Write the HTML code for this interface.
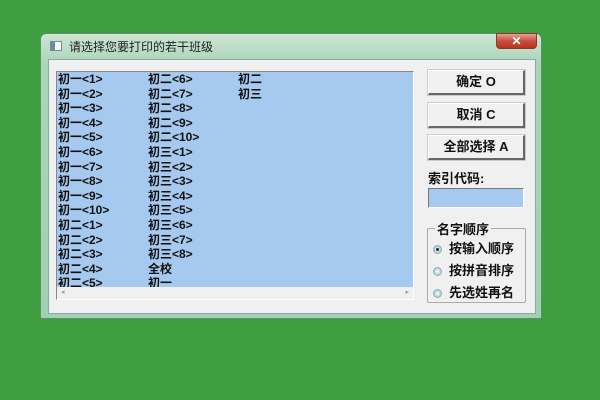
<!DOCTYPE html>
<html><head><meta charset="utf-8"><style>
*{margin:0;padding:0;box-sizing:border-box}
body{width:600px;height:400px;background:#3f9e40;position:relative;overflow:hidden;font-family:"Liberation Sans","Noto Sans CJK SC","WenQuanYi Zen Hei",sans-serif}
.win{position:absolute;left:40px;top:33px;width:502px;height:286px;background:linear-gradient(#cfe4d6,#a9d6b8 30px,#9fd1b2);border:1px solid #5f8f6e;border-radius:6px 6px 2px 2px}
.title{position:absolute;left:28px;top:4px;font-size:12px;color:#222;}
.ico{position:absolute;left:9px;top:7px;width:12px;height:10px;background:#fff;border:1px solid #7a8a8a}
.ico:before{content:"";position:absolute;left:0;top:0;width:4px;height:8px;background:#6a8aa8}
.close{position:absolute;left:455px;top:-1px;width:41px;height:16px;border-radius:0 0 4px 4px;background:linear-gradient(#e6a098,#c84e3c 50%,#b8331f);border:1px solid #8a3a2a;color:#fff;font-weight:bold;font-size:12px;text-align:center;line-height:14px}
.client{position:absolute;left:7px;top:25px;width:488px;height:255px;background:#f0f0f0;border:1px solid #8aa}
.list{position:absolute;left:7px;top:11px;width:358px;height:229px;background:#a6c9ef;border:1px solid #888;border-right-color:#fff;border-bottom-color:#fff;overflow:hidden}
.col{position:absolute;top:0px;font-size:12px;font-weight:bold;line-height:14.6px;color:#111;white-space:nowrap}
.hs{position:absolute;left:0;bottom:0;width:100%;height:12px;background:#f0f0f0;font-size:7px;color:#999;line-height:12px;z-index:2}
.btn{position:absolute;left:379px;width:97px;height:25px;background:#f0f0f0;border:1px solid #fff;border-right:2px solid #666;border-bottom:2px solid #666;outline:1px solid #ccc;font-size:13px;font-weight:bold;text-align:center;line-height:22px;color:#111}
.lab{position:absolute;left:379px;top:108px;font-size:13px;font-weight:bold;color:#111}
.inp{position:absolute;left:379px;top:128px;width:96px;height:20px;background:#a6c9ef;border:1px solid #777;border-right-color:#fff;border-bottom-color:#fff}
.grp{position:absolute;left:378px;top:168px;width:99px;height:75px;border:1px solid #aaa;border-radius:2px}
.grp .lg{position:absolute;left:7px;top:-10px;background:#f0f0f0;padding:0 2px;font-size:13px;font-weight:bold;color:#111}
.r{position:absolute;left:5px;font-size:13px;font-weight:bold;color:#111;white-space:nowrap}
.r i{display:inline-block;width:9px;height:9px;border-radius:50%;background:radial-gradient(#fff,#9cc 80%);border:1px solid #9ab;margin-right:7px;vertical-align:-1px;position:relative}
.r i.on:after{content:"";position:absolute;left:2px;top:2px;width:3px;height:3px;border-radius:50%;background:#123}
</style></head><body>
<div class="win">
<div class="ico"></div>
<div class="title">请选择您要打印的若干班级</div>
<div class="close">✕</div>
<div class="client">
<div class="list">
<div class="col" style="left:1px">初一&lt;1&gt;<br>初一&lt;2&gt;<br>初一&lt;3&gt;<br>初一&lt;4&gt;<br>初一&lt;5&gt;<br>初一&lt;6&gt;<br>初一&lt;7&gt;<br>初一&lt;8&gt;<br>初一&lt;9&gt;<br>初一&lt;10&gt;<br>初二&lt;1&gt;<br>初二&lt;2&gt;<br>初二&lt;3&gt;<br>初二&lt;4&gt;<br>初二&lt;5&gt;</div>
<div class="col" style="left:91px">初二&lt;6&gt;<br>初二&lt;7&gt;<br>初二&lt;8&gt;<br>初二&lt;9&gt;<br>初二&lt;10&gt;<br>初三&lt;1&gt;<br>初三&lt;2&gt;<br>初三&lt;3&gt;<br>初三&lt;4&gt;<br>初三&lt;5&gt;<br>初三&lt;6&gt;<br>初三&lt;7&gt;<br>初三&lt;8&gt;<br>全校<br>初一</div>
<div class="col" style="left:181px">初二<br>初三</div>
<div class="hs"><span style="position:absolute;left:4px">◂</span><span style="position:absolute;right:4px">▸</span></div>
</div>
<div class="btn" style="top:10px">确定 O</div>
<div class="btn" style="top:43px">取消 C</div>
<div class="btn" style="top:75px">全部选择 A</div>
<div class="lab">索引代码:</div>
<div class="inp"></div>
<div class="grp"><div class="lg">名字顺序</div>
<div class="r" style="top:9px"><i class="on"></i>按输入顺序</div>
<div class="r" style="top:31px"><i></i>按拼音排序</div>
<div class="r" style="top:53px"><i></i>先选姓再名</div>
</div>
</div>
</div>
</body></html>
